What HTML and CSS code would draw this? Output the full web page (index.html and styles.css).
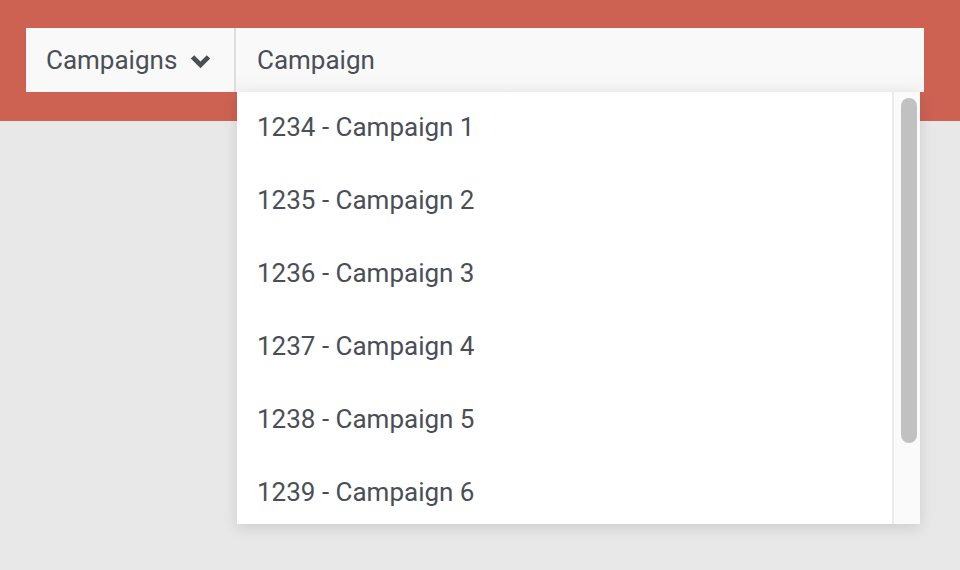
FILE: index.html
```html
<!DOCTYPE html>
<html>
<head>
<meta charset="utf-8">
<link rel="stylesheet" href="styles.css">
</head>
<body>
<header class="header">
  <div class="bar">
    <div class="filter-btn">
      <span>Campaigns</span>
      <svg class="chevron" width="21" height="15" viewBox="0 0 21 15"><path d="M0.8 4.6 L4.2 1.2 L10.5 7.5 L16.8 1.2 L20.2 4.6 L10.5 14.3 Z" fill="#4a4e55"/></svg>
    </div>
    <div class="search">
      <div class="placeholder">Campaign</div>
      <div class="dropdown">
        <ul class="list">
          <li>1234 - Campaign 1</li>
          <li>1235 - Campaign 2</li>
          <li>1236 - Campaign 3</li>
          <li>1237 - Campaign 4</li>
          <li>1238 - Campaign 5</li>
          <li>1239 - Campaign 6</li>
        </ul>
        <div class="track"><div class="thumb"></div></div>
      </div>
    </div>
  </div>
</header>
</body>
</html>
```
FILE: styles.css
```css
html, body {
  margin: 0;
  padding: 0;
}
body {
  width: 960px;
  height: 570px;
  background: #e8e8e8;
  font-family: Roboto, "Liberation Sans", sans-serif;
  color: #4a4f57;
  overflow: hidden;
}
.header {
  background: #cd6253;
  height: 121px;
  padding: 28px 36px 0 26px;
  box-sizing: border-box;
}
.bar {
  display: flex;
  height: 64px;
  background: #f9f9f9;
}
.filter-btn {
  width: 210px;
  flex: none;
  display: flex;
  align-items: center;
  padding-left: 20px;
  box-sizing: border-box;
  font-size: 26px;
  gap: 13px;
  border-right: 2px solid #dedede;
}
.chevron {
  margin-top: 2px;
}
.search {
  flex: 1;
  position: relative;
}
.placeholder {
  height: 64px;
  line-height: 65px;
  padding-left: 21px;
  font-size: 26px;
  background: linear-gradient(#f9f9f9 70%, #f4f4f4);
}
.dropdown {
  position: absolute;
  top: 64px;
  left: 1px;
  width: 683px;
  height: 432px;
  background: #fff;
  display: flex;
  box-shadow: 0 4px 14px rgba(0,0,0,0.12);
  z-index: 2;
}
.list {
  flex: 1;
  list-style: none;
  margin: 0;
  padding: 0;
}
.list li {
  height: 73px;
  line-height: 70px;
  padding-left: 20px;
  font-size: 26px;
}
.track {
  width: 28px;
  flex: none;
  background: #fafafa;
  border-left: 2px solid #ebebeb;
  padding: 6px 0 0 7px;
  box-sizing: border-box;
}
.thumb {
  width: 16px;
  height: 345px;
  border-radius: 8px;
  background: #c1c1c1;
}
```
